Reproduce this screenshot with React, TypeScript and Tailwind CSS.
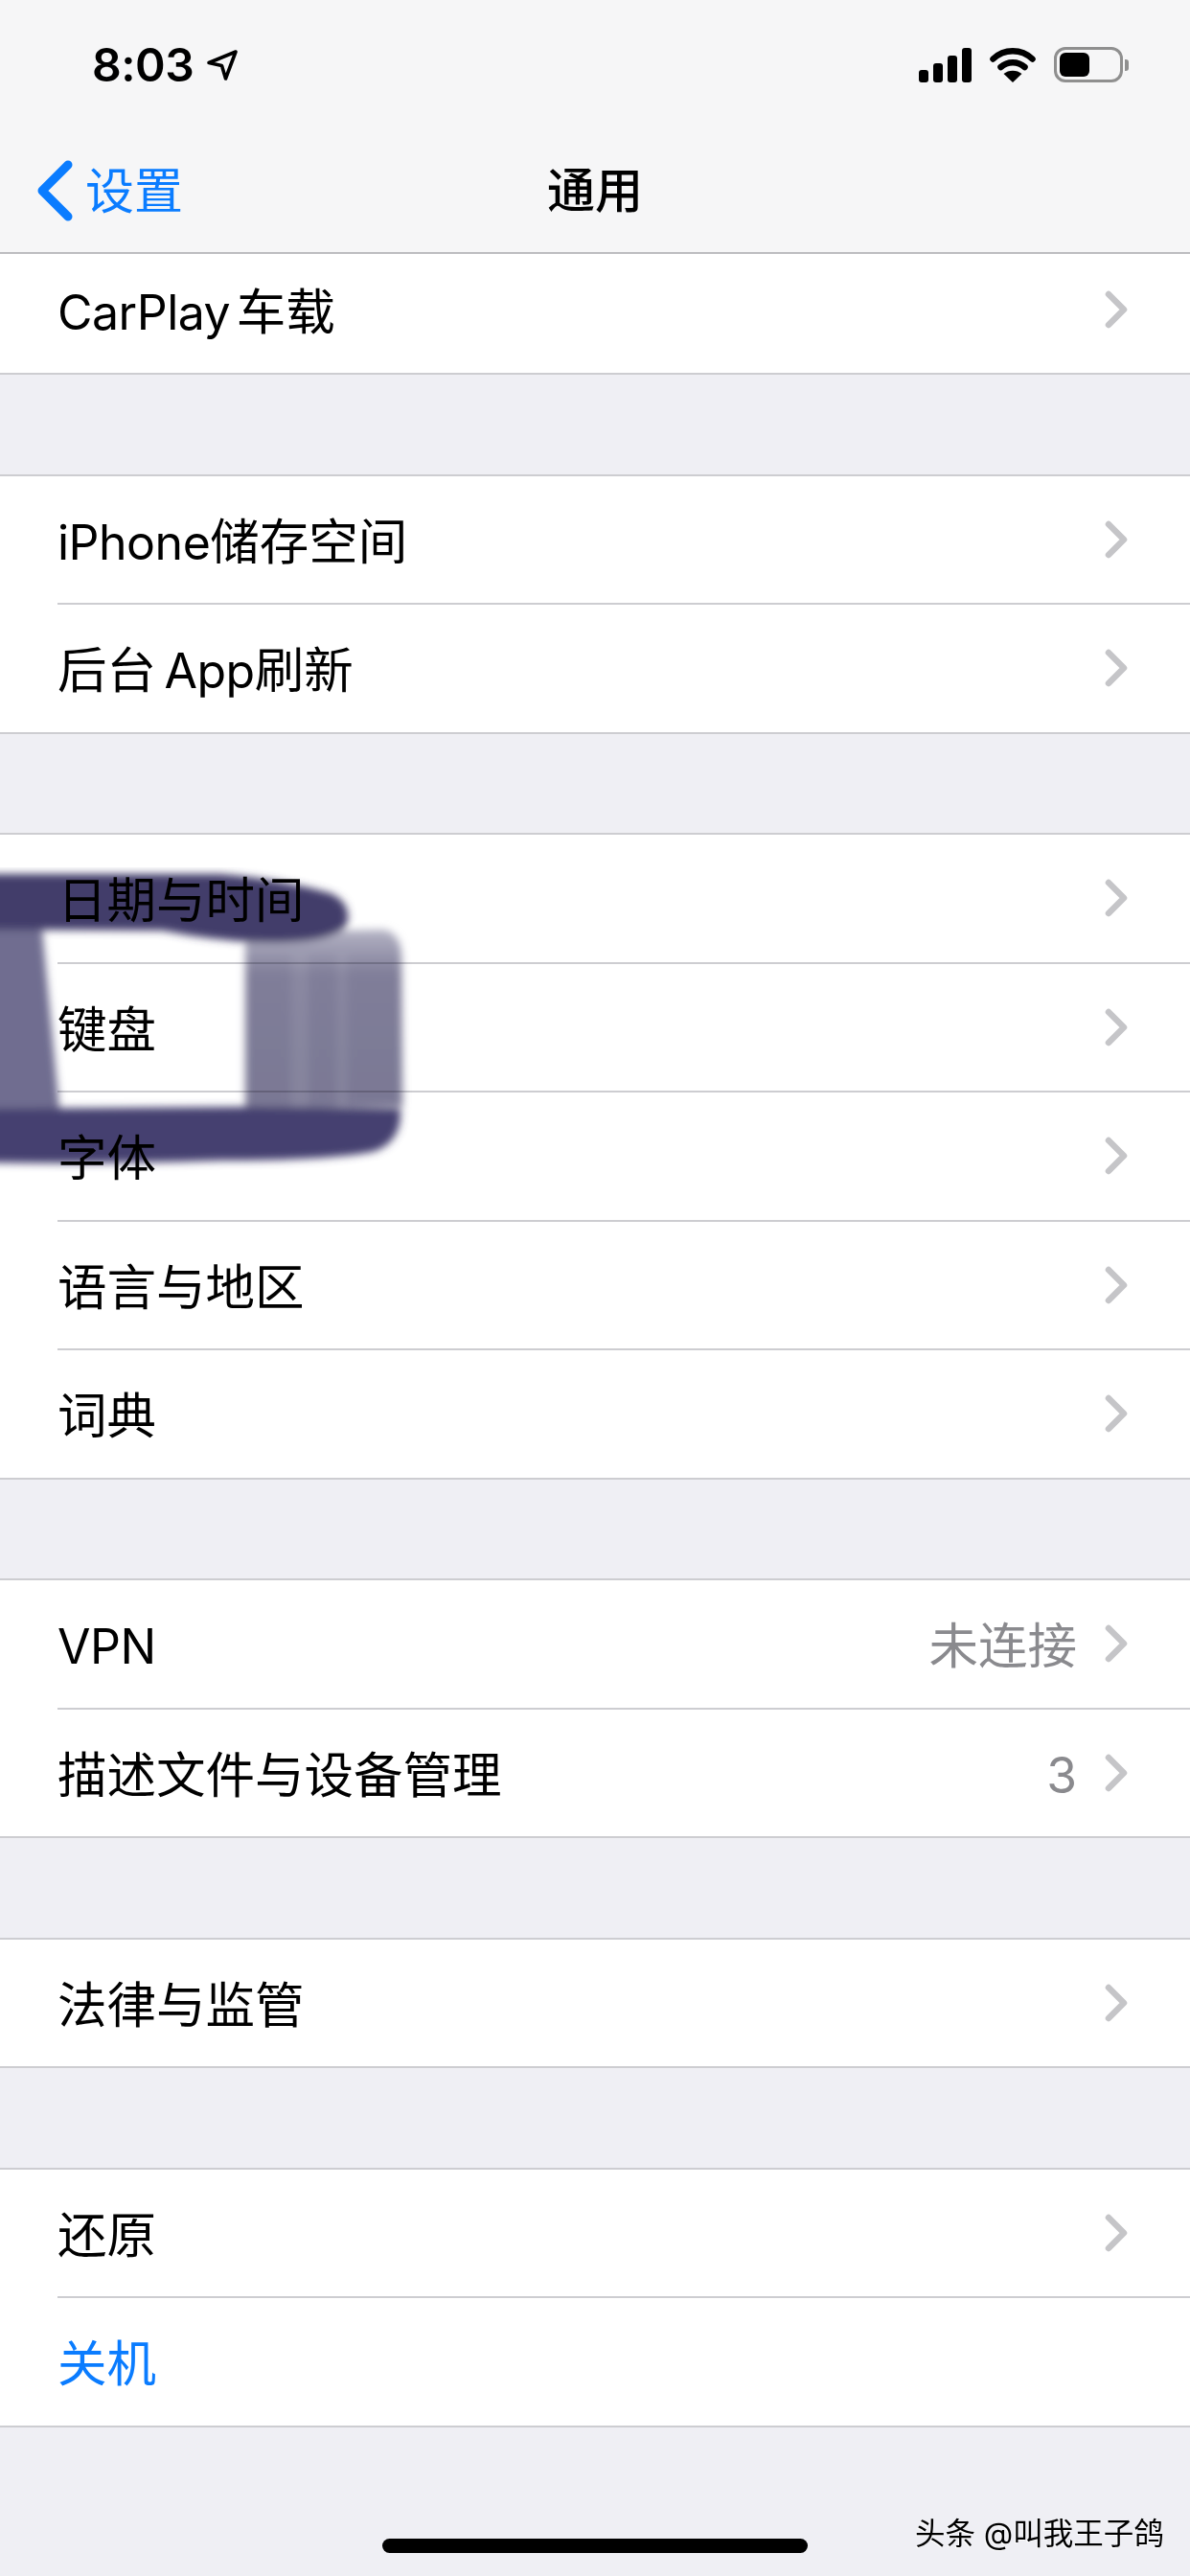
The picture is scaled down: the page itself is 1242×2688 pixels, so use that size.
import React from "react";

const font = { fontFamily: '"Inter", "Noto Sans CJK SC", sans-serif' };

function Chevron() {
  return (
    <svg width="24" height="40" viewBox="0 0 24 40" className="shrink-0" fill="none">
      <path d="M4 4 L20 20 L4 36" stroke="#c5c5c8" strokeWidth="6.5" strokeLinecap="round" strokeLinejoin="round" />
    </svg>
  );
}

function Latin({ children }: { children: React.ReactNode }) {
  return <span className="text-[50px] tracking-[-0.5px]">{children}</span>;
}

type RowData = { id: string; label: React.ReactNode; value?: string; blue?: boolean; noArrow?: boolean };

function Row({ label, value, blue, noArrow, last }: RowData & { last: boolean }) {
  return (
    <div className={`${last ? "h-[132.5px]" : "h-[134.5px]"} bg-white pl-[60px]`}>
      <div className={`flex h-full items-center pr-[65px] ${last ? "" : "border-b-2 border-[#cdcdd1]"}`}>
        <span className={`flex-1 pt-[5px] text-[51.5px] leading-none ${blue ? "text-[#0a7cff]" : "text-black"}`}>{label}</span>
        {value && <span className="mr-[29px] pt-[5px] text-[51.5px] leading-none text-[#8a8a8e]">{value}</span>}
        {!noArrow && <Chevron />}
      </div>
    </div>
  );
}

function Group({ rows }: { rows: RowData[] }) {
  return (
    <div className="border-y-2 border-[#cdcdd1]">
      {rows.map((r, i) => (
        <Row key={r.id} {...r} last={i === rows.length - 1} />
      ))}
    </div>
  );
}

function StatusIcons() {
  return (
    <div className="flex items-center">
      <svg width="56" height="36" viewBox="0 0 56 36" fill="#000">
        <rect x="0" y="23" width="10" height="13" rx="3" />
        <rect x="15" y="16" width="10" height="20" rx="3" />
        <rect x="30" y="8" width="10" height="28" rx="3" />
        <rect x="45" y="0" width="10" height="36" rx="3" />
      </svg>
      <svg width="48" height="37" viewBox="0 0 48 37" fill="none" className="ml-[18px]">
        <path d="M3.5 12.5 C15 1.5 33 1.5 44.5 12.5" stroke="#000" strokeWidth="6.5" strokeLinecap="round" />
        <path d="M11.5 21 C18.5 14.5 29.5 14.5 36.5 21" stroke="#000" strokeWidth="6.5" strokeLinecap="round" />
        <path d="M24 37 L14.5 28 C19.5 23.5 28.5 23.5 33.5 28 Z" fill="#000" />
      </svg>
      <div className="ml-[19px] flex items-center">
        <div className="flex h-[37px] w-[72px] items-center rounded-[12px] border-[3px] border-[#8f8f8f] pl-[3px]">
          <div className="h-[25px] w-[31px] rounded-[6px] bg-black" />
        </div>
        <div className="ml-[2px] h-[12px] w-[4px] rounded-r-[3px] bg-[#8f8f8f]" />
      </div>
    </div>
  );
}

export default function App() {
  return (
    <div className="relative min-h-[2688px] w-[1242px] overflow-hidden bg-[#efeff4]" style={font}>
      <div className="h-[265px] border-b-2 border-[#bdbdc0] bg-[#f6f6f7]">
        <div className="flex h-[136px] items-start justify-between pl-[96px] pr-[64px] pt-[49px]">
          <div className="flex items-center">
            <span className="text-[48px] leading-[37px] font-semibold tracking-[-0.5px] text-black">8:03</span>
            <svg width="34" height="34" viewBox="0 0 34 34" fill="none" className="ml-[13px]">
              <path d="M3 14.5 L31 3 L20.5 31 L16.5 17.5 Z" stroke="#000" strokeWidth="3.6" strokeLinejoin="round" />
            </svg>
          </div>
          <StatusIcons />
        </div>
        <div className="grid h-[126px] grid-cols-[1fr_auto_1fr] items-center">
          <div className="flex items-center pl-[38px]">
            <svg width="38" height="64" viewBox="0 0 38 64" fill="none">
              <path d="M33 5 L6 32 L33 59" stroke="#0a7cff" strokeWidth="9" strokeLinecap="round" strokeLinejoin="round" />
            </svg>
            <span className="ml-[13px] text-[51px] leading-none text-[#0a7cff]">设置</span>
          </div>
          <span className="text-[50px] leading-none font-medium text-black">通用</span>
          <div />
        </div>
      </div>

      <div className="flex flex-col gap-[103.5px]">
        <div className="border-b-2 border-[#cdcdd1]">
          <div className="h-[124px] bg-white pl-[60px]">
            <div className="flex h-full items-center pb-[8px] pr-[65px]">
              <span className="flex-1 pt-[5px] text-[51.5px] leading-none text-black [word-spacing:-8px]">
                <Latin>CarPlay</Latin> 车载
              </span>
              <Chevron />
            </div>
          </div>
        </div>
        <Group
          rows={[
            { id: "storage", label: <><Latin>iPhone</Latin>储存空间</> },
            { id: "refresh", label: <span className="[word-spacing:-6px]">后台 <Latin>App</Latin>刷新</span> },
          ]}
        />
        <Group
          rows={[
            { id: "date", label: "日期与时间" },
            { id: "kbd", label: "键盘" },
            { id: "font", label: "字体" },
            { id: "lang", label: "语言与地区" },
            { id: "dict", label: "词典" },
          ]}
        />
        <Group
          rows={[
            { id: "vpn", label: <Latin>VPN</Latin>, value: "未连接" },
            { id: "profile", label: "描述文件与设备管理", value: "3" },
          ]}
        />
        <Group rows={[{ id: "legal", label: "法律与监管" }]} />
        <Group rows={[{ id: "reset", label: "还原" }, { id: "off", label: "关机", blue: true, noArrow: true }]} />
      </div>

      <svg
        width="440"
        height="320"
        viewBox="0 0 440 320"
        className="absolute left-0 top-[905px] mix-blend-multiply"
        fill="none"
      >
        <defs>
          <filter id="soft" x="-10%" y="-10%" width="120%" height="120%">
            <feGaussianBlur stdDeviation="4" />
          </filter>
          <linearGradient id="fade" x1="0" y1="0" x2="0" y2="1">
            <stop offset="0" stopColor="#b4b3c4" />
            <stop offset="0.25" stopColor="#807e99" />
            <stop offset="1" stopColor="#7a7894" />
          </linearGradient>
        </defs>
        <g filter="url(#soft)">
          <path d="M-10 65 L44 65 L62 252 L-10 252 Z" fill="#6f6d90" />
          <path d="M256 68 L400 65 Q418 68 419 92 L420 250 L256 252 Z" fill="url(#fade)" />
          <path d="M304 90 L322 90 L322 250 L304 250 Z M352 90 L362 90 L362 250 L352 250 Z" fill="#d8d8e0" opacity="0.12" />
          <path d="M-10 7 L230 7 Q290 12 345 27 Q368 38 362 60 Q350 76 300 78 Q240 80 170 66 L-10 65 Z" fill="#423d6b" />
          <path d="M-10 252 L256 250 L418 252 Q420 285 392 296 Q350 306 230 306 Q100 310 -10 308 Z" fill="#45416f" />
        </g>
      </svg>

      <div className="absolute left-[399px] top-[2649px] h-[15px] w-[444px] rounded-[8px] bg-black" />
      <div className="absolute left-[955px] top-[2626px] text-[31.5px] leading-[36px] whitespace-nowrap text-black [text-shadow:-1px_1px_0_#fff]">
        头条 @叫我王子鸽
      </div>
    </div>
  );
}
